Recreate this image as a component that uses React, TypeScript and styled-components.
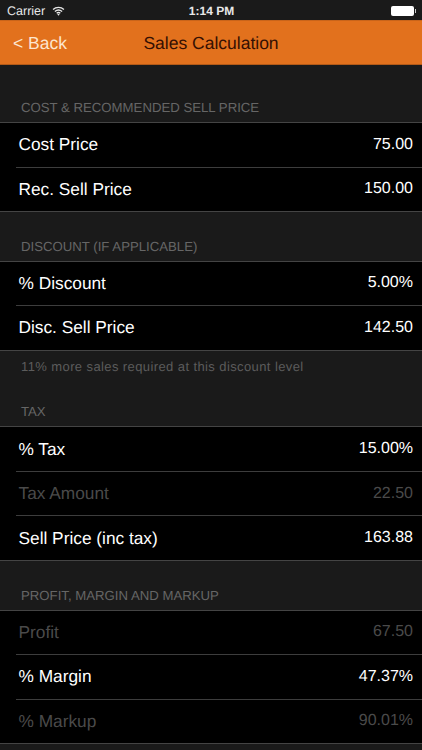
import { FC } from 'react'
import styled, { createGlobalStyle } from 'styled-components'

const GlobalStyle = createGlobalStyle`
  html, body {
    margin: 0;
    padding: 0;
    background: #1a1a1a;
    height: 100%;
    overflow: hidden;
  }
  * {
    box-sizing: border-box;
  }
`

const Screen = styled.div`
  width: 422px;
  height: 750px;
  overflow: hidden;
  background: #1a1a1a;
  font-family: 'Liberation Sans', Arial, sans-serif;
  text-rendering: geometricPrecision;
  color: #fff;
`

const StatusBar = styled.div`
  display: grid;
  grid-template-columns: 1fr auto 1fr;
  align-items: center;
  height: 20px;
  padding: 2px 6px 0 7px;
  font-size: 12.5px;
  color: #e8e8e8;
`

const Carrier = styled.div`
  display: flex;
  align-items: center;
  gap: 7px;
`

const Clock = styled.div`
  font-weight: 700;
  font-size: 12px;
`

const Battery = styled.div`
  justify-self: end;
  display: flex;
  align-items: center;
`

const BatteryBody = styled.div`
  width: 23px;
  height: 10px;
  border-radius: 2px;
  background: #fff;
`

const BatteryTip = styled.div`
  width: 1.5px;
  height: 4px;
  margin-left: 1px;
  background: #ccc;
`

const NavBar = styled.div`
  display: grid;
  grid-template-columns: 1fr auto 1fr;
  align-items: center;
  height: 45px;
  padding: 1px 0 0 13px;
  background: #e2711d;
  border-top: 1px solid #c9641a;
  border-bottom: 1px solid #b35a18;
`

const BackLink = styled.div`
  font-size: 17.5px;
  color: #fde6cf;
`

const NavTitle = styled.div`
  font-size: 17.5px;
  color: #351003;
  margin-left: -13px;
`

const Content = styled.div`
  padding-top: 33px;
`

const Section = styled.section`
  margin-bottom: 24.7px;
`

const SectionHeader = styled.div`
  height: 24px;
  padding: 1px 0 0 21px;
  font-size: 13.2px;
  line-height: 18px;
  color: #666;
  white-space: nowrap;
`

const Table = styled.div`
  background: #000;
  border-top: 1px solid #444;
  border-bottom: 1px solid #444;
`

const Row = styled.div<{ $muted?: boolean }>`
  display: flex;
  justify-content: space-between;
  align-items: center;
  height: 44.5px;
  margin-left: 16px;
  padding: 0 9px 0 2.5px;
  border-bottom: 1px solid #3d3d3d;
  color: ${(p) => (p.$muted ? '#4a4a4a' : '#fff')};

  &:last-child {
    height: 43.5px;
    border-bottom: none;
  }
`

const RowLabel = styled.div`
  font-size: 17.3px;
`

const RowValue = styled.div`
  font-size: 16px;
`

const SectionFooter = styled.div`
  height: 27px;
  padding: 8px 0 0 21px;
  font-size: 13px;
  line-height: 16px;
  letter-spacing: 0.4px;
  color: #5c5c5c;
`

const WifiIcon: FC = () => (
  <svg width="13" height="10" viewBox="0 0 14 11" fill="none" stroke="#e8e8e8" strokeWidth="1.5">
    <path d="M1 3.8C4.4.8 9.6.8 13 3.8" />
    <path d="M3 6C5.4 4 8.6 4 11 6" />
    <path d="M5 8C6.2 7 7.8 7 9 8" />
    <path d="M7 10.6 5.7 9.2C6.5 8.6 7.5 8.6 8.3 9.2Z" fill="#e8e8e8" stroke="none" />
  </svg>
)

interface IRow {
  label: string
  value: string
  muted?: boolean
}

interface ISection {
  title: string
  footer?: string
  rows: IRow[]
}

const sections: ISection[] = [
  {
    title: 'COST & RECOMMENDED SELL PRICE',
    rows: [
      { label: 'Cost Price', value: '75.00' },
      { label: 'Rec. Sell Price', value: '150.00' },
    ],
  },
  {
    title: 'DISCOUNT (IF APPLICABLE)',
    footer: '11% more sales required at this discount level',
    rows: [
      { label: '% Discount', value: '5.00%' },
      { label: 'Disc. Sell Price', value: '142.50' },
    ],
  },
  {
    title: 'TAX',
    rows: [
      { label: '% Tax', value: '15.00%' },
      { label: 'Tax Amount', value: '22.50', muted: true },
      { label: 'Sell Price (inc tax)', value: '163.88' },
    ],
  },
  {
    title: 'PROFIT, MARGIN AND MARKUP',
    rows: [
      { label: 'Profit', value: '67.50', muted: true },
      { label: '% Margin', value: '47.37%' },
      { label: '% Markup', value: '90.01%', muted: true },
    ],
  },
]

export default function App() {
  return (
    <>
      <GlobalStyle />
      <Screen>
        <StatusBar>
          <Carrier>
            Carrier
            <WifiIcon />
          </Carrier>
          <Clock>1:14 PM</Clock>
          <Battery>
            <BatteryBody />
            <BatteryTip />
          </Battery>
        </StatusBar>
        <NavBar>
          <BackLink>&lt; Back</BackLink>
          <NavTitle>Sales Calculation</NavTitle>
        </NavBar>
        <Content>
          {sections.map((section) => (
            <Section key={section.title}>
              <SectionHeader>{section.title}</SectionHeader>
              <Table>
                {section.rows.map((row) => (
                  <Row key={row.label} $muted={row.muted}>
                    <RowLabel>{row.label}</RowLabel>
                    <RowValue>{row.value}</RowValue>
                  </Row>
                ))}
              </Table>
              {section.footer && <SectionFooter>{section.footer}</SectionFooter>}
            </Section>
          ))}
        </Content>
      </Screen>
    </>
  )
}
